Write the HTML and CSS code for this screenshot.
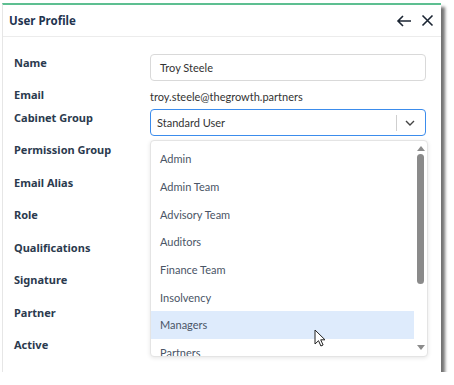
FILE: index.html
```html
<!doctype html>
<html lang="en">
  <head>
    <meta charset="UTF-8" />
    <title>User Profile</title>
    <link rel="stylesheet" href="styles.css">
  </head>
  <body>
    <div class="dialog">
      <div class="dialog-header">
        <h2 class="dialog-title">User Profile</h2>
        <div class="header-actions">
          <svg class="icon" width="16" height="14" viewBox="0 0 16 14">
            <path d="M15 7H2M7 2L2 7l5 5" fill="none" stroke="#1b2533" stroke-width="1.6" />
          </svg>
          <svg class="icon" width="13" height="13" viewBox="0 0 13 13">
            <path d="M1.5 1.5l10 10M11.5 1.5l-10 10" fill="none" stroke="#1b2533" stroke-width="1.6" />
          </svg>
        </div>
      </div>

      <div class="form-grid">
        <div class="field-label top">Name</div>
        <div class="text-input">Troy Steele</div>

        <div class="field-label">Email</div>
        <div class="field-value">troy.steele@thegrowth.partners</div>

        <div class="field-label top">Cabinet Group</div>
        <div class="select-wrap">
          <div class="select-box">
            <span class="select-value">Standard User</span>
            <span class="select-divider"></span>
            <svg class="chevron" width="10" height="6" viewBox="0 0 10 6">
              <path d="M1 1l4 4 4-4" fill="none" stroke="#444" stroke-width="1.4" />
            </svg>
          </div>

          <div class="dropdown-menu">
            <div class="menu-list">
              <div class="menu-item">Admin</div>
              <div class="menu-item">Admin Team</div>
              <div class="menu-item">Advisory Team</div>
              <div class="menu-item">Auditors</div>
              <div class="menu-item">Finance Team</div>
              <div class="menu-item">Insolvency</div>
              <div class="menu-item hover">Managers</div>
              <div class="menu-item">Partners</div>
            </div>
            <div class="scrollbar">
              <span class="arrow-up"></span>
              <span class="thumb"></span>
              <span class="arrow-down"></span>
            </div>
          </div>

          <svg class="cursor" width="12" height="18" viewBox="0 0 12 18">
            <path d="M1 1v14l3.5-3.3 2.4 5.3 2.2-1-2.4-5.2H11z" fill="#fff" stroke="#222" stroke-width="1" stroke-linejoin="round" />
          </svg>
        </div>

        <div class="label-list">
          <div class="field-label row">Permission Group</div>
          <div class="field-label row">Email Alias</div>
          <div class="field-label row">Role</div>
          <div class="field-label row">Qualifications</div>
          <div class="field-label row">Signature</div>
          <div class="field-label row">Partner</div>
          <div class="field-label row">Active</div>
        </div>
      </div>
    </div>
  </body>
</html>
```

FILE: styles.css
```css
body {
  margin: 0;
  background: #fff;
  font-family: Lato, "Open Sans", Arial, sans-serif;
}

.dialog {
  width: 439px;
  height: 369px;
  margin: 3px 0 0 2px;
  background: white;
  border-top: 2px solid #5dbf91;
  border-left: 1px solid #e6e6e6;
  box-shadow: 4px 4px 3px rgba(0, 0, 0, 0.55);
  box-sizing: border-box;
  overflow: hidden;
}

.dialog-header {
  display: flex;
  align-items: center;
  justify-content: space-between;
  height: 31px;
  padding: 0 7px 0 6px;
  border-bottom: 1px solid #ececec;
}

.dialog-title {
  margin: 0;
  font-family: "Noto Sans", sans-serif;
  font-size: 11.5px;
  font-weight: 700;
  color: #1f3450;
}

.header-actions {
  display: flex;
  align-items: center;
  gap: 9px;
}

.icon {
  display: block;
}

.form-grid {
  display: grid;
  grid-template-columns: 136px 276px;
  padding: 17px 0 0 11px;
}

.field-label {
  font-family: "Noto Sans", sans-serif;
  font-size: 11px;
  font-weight: 700;
  color: #2b3a4e;
  line-height: 16px;
  align-self: center;
}

.field-label.top {
  align-self: start;
  padding-top: 1px;
}

.text-input {
  height: 27px;
  box-sizing: border-box;
  border: 1px solid #d9d9d9;
  border-radius: 4px;
  padding: 0 9px;
  display: flex;
  align-items: center;
  font-size: 11px;
  color: #333;
}

.field-value {
  height: 28px;
  display: flex;
  align-items: center;
  font-size: 11px;
  color: #333;
  padding-top: 2px;
  box-sizing: border-box;
}

.select-wrap {
  position: relative;
}

.select-box {
  height: 27px;
  box-sizing: border-box;
  border: 1px solid #3b8cec;
  border-radius: 4px;
  display: flex;
  align-items: center;
  padding: 0 10px 0 6px;
  font-size: 11px;
  color: #333;
}

.select-value {
  flex: 1;
}

.select-divider {
  width: 1px;
  height: 16px;
  background: #cfcfcf;
  margin-right: 8px;
}

.dropdown-menu {
  position: absolute;
  top: 31px;
  left: 0;
  width: 278px;
  height: 217px;
  box-sizing: border-box;
  background: white;
  border: 1px solid #e4e4e4;
  border-radius: 4px;
  box-shadow: 0 1px 4px rgba(0, 0, 0, 0.1);
  display: flex;
  overflow: hidden;
  z-index: 10;
}

.menu-list {
  flex: 1;
  padding-top: 4px;
}

.menu-item {
  height: 27.7px;
  display: flex;
  align-items: center;
  padding-left: 9px;
  font-size: 11px;
  color: #4a5566;
}

.menu-item.hover {
  background: #deebfc;
}

.scrollbar {
  width: 13px;
  display: flex;
  flex-direction: column;
  align-items: center;
  padding-top: 5px;
}

.arrow-up {
  width: 0;
  height: 0;
  border-left: 4px solid transparent;
  border-right: 4px solid transparent;
  border-bottom: 5px solid #8c8c8c;
}

.thumb {
  width: 7px;
  height: 130px;
  margin-top: 3px;
  border-radius: 4px;
  background: #8a8a8a;
}

.arrow-down {
  width: 0;
  height: 0;
  margin-top: auto;
  margin-bottom: 6px;
  border-left: 4px solid transparent;
  border-right: 4px solid transparent;
  border-top: 5px solid #8c8c8c;
}

.cursor {
  position: absolute;
  left: 164px;
  top: 220px;
  z-index: 20;
}

.label-list {
  grid-column: 1;
  padding-top: 6px;
}

.field-label.row {
  height: 32.5px;
  line-height: 16px;
}
```
